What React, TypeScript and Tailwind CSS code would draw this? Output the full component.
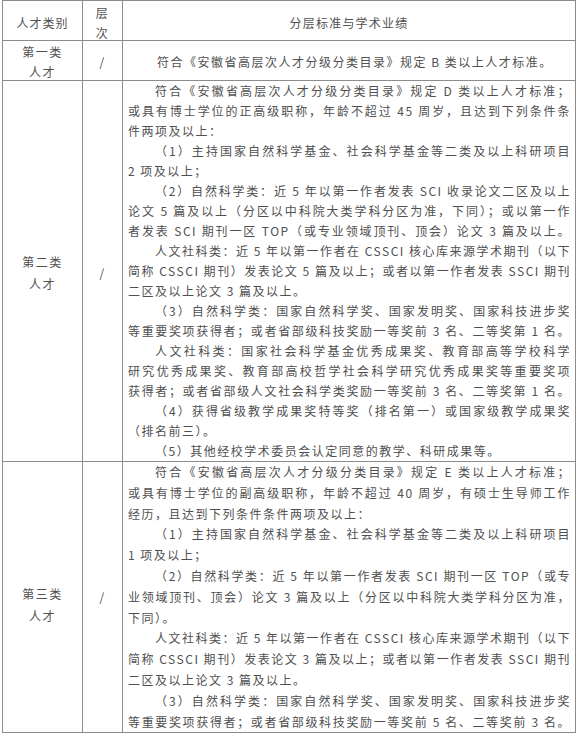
import React from "react";

type Line = { t: string; i?: boolean; f?: boolean };

const row2: Line[] = [
  { t: "符合《安徽省高层次人才分级分类目录》规定 D 类以上人才标准；", i: true, f: true },
  { t: "或具有博士学位的正高级职称，年龄不超过 45 周岁，且达到下列条件条", f: true },
  { t: "件两项及以上：" },
  { t: "（1）主持国家自然科学基金、社会科学基金等二类及以上科研项目", i: true, f: true },
  { t: "2 项及以上；" },
  { t: "（2）自然科学类：近 5 年以第一作者发表 SCI 收录论文二区及以上", i: true, f: true },
  { t: "论文 5 篇及以上（分区以中科院大类学科分区为准，下同）；或以第一作", f: true },
  { t: "者发表 SCI 期刊一区 TOP（或专业领域顶刊、顶会）论文 3 篇及以上。", f: true },
  { t: "人文社科类：近 5 年以第一作者在 CSSCI 核心库来源学术期刊（以下", i: true, f: true },
  { t: "简称 CSSCI 期刊）发表论文 5 篇及以上；或者以第一作者发表 SSCI 期刊", f: true },
  { t: "二区及以上论文 3 篇及以上。" },
  { t: "（3）自然科学类：国家自然科学奖、国家发明奖、国家科技进步奖", i: true, f: true },
  { t: "等重要奖项获得者；或者省部级科技奖励一等奖前 3 名、二等奖第 1 名。", f: true },
  { t: "人文社科类：国家社会科学基金优秀成果奖、教育部高等学校科学", i: true, f: true },
  { t: "研究优秀成果奖、教育部高校哲学社会科学研究优秀成果奖等重要奖项", f: true },
  { t: "获得者；或者省部级人文社会科学类奖励一等奖前 3 名、二等奖第 1 名。", f: true },
  { t: "（4）获得省级教学成果奖特等奖（排名第一）或国家级教学成果奖", i: true, f: true },
  { t: "（排名前三）。" },
  { t: "（5）其他经校学术委员会认定同意的教学、科研成果等。", i: true },
];

const row3: Line[] = [
  { t: "符合《安徽省高层次人才分级分类目录》规定 E 类以上人才标准；", i: true, f: true },
  { t: "或具有博士学位的副高级职称，年龄不超过 40 周岁，有硕士生导师工作", f: true },
  { t: "经历，且达到下列条件条件两项及以上：" },
  { t: "（1）主持国家自然科学基金、社会科学基金等二类及以上科研项目", i: true, f: true },
  { t: "1 项及以上；" },
  { t: "（2）自然科学类：近 5 年以第一作者发表 SCI 期刊一区 TOP（或专", i: true, f: true },
  { t: "业领域顶刊、顶会）论文 3 篇及以上（分区以中科院大类学科分区为准，", f: true },
  { t: "下同）。" },
  { t: "人文社科类：近 5 年以第一作者在 CSSCI 核心库来源学术期刊（以下", i: true, f: true },
  { t: "简称 CSSCI 期刊）发表论文 3 篇及以上；或者以第一作者发表 SSCI 期刊", f: true },
  { t: "二区及以上论文 3 篇及以上。" },
  { t: "（3）自然科学类：国家自然科学奖、国家发明奖、国家科技进步奖", i: true, f: true },
  { t: "等重要奖项获得者；或者省部级科技奖励一等奖前 5 名、二等奖前 3 名。", f: true },
];

function TextLine({ line }: { line: Line }) {
  return (
    <div
      className={`whitespace-nowrap ${line.f ? "text-justify [text-align-last:justify]" : "text-left"} ${
        line.i ? "pl-[27px]" : "pl-0"
      }`}
    >
      {line.t}
    </div>
  );
}

const cell = "border-r border-b border-[#8c8c8c]";

export default function App() {
  return (
    <div className="w-[577px] h-[733px] overflow-hidden bg-white font-['Noto_Sans_CJK_SC',sans-serif] text-[12px] tracking-[1.5px] text-[#505050]">
      <div className="ml-[2px] w-[574px] border-t border-l border-[#8c8c8c] grid grid-cols-[80px_40px_1fr]">
        {/* header */}
        <div className={`${cell} h-[40px] flex items-center justify-center pt-[4px] tracking-[1px]`}>人才类别</div>
        <div className={`${cell} h-[40px] flex flex-col items-center justify-center leading-[20px] pt-[4px]`}>
          <span>层</span>
          <span>次</span>
        </div>
        <div className={`${cell} h-[40px] flex items-center justify-center pt-[4px] tracking-[1.2px]`}>
          分层标准与学术业绩
        </div>

        {/* row 1 */}
        <div className={`${cell} h-[40px] flex flex-col items-center justify-center leading-[20px] pt-[2px]`}>
          <span>第一类</span>
          <span>人才</span>
        </div>
        <div className={`${cell} h-[40px] flex items-center justify-center pt-[3px]`}>/</div>
        <div className={`${cell} h-[40px] flex items-center pl-[5px] pr-[4px] pt-[3px]`}>
          <div className="pl-[29px] whitespace-nowrap">符合《安徽省高层次人才分级分类目录》规定 B 类以上人才标准。</div>
        </div>

        {/* row 2 */}
        <div className={`${cell} flex flex-col items-center justify-center leading-[22px] pt-[4px]`}>
          <span>第二类</span>
          <span>人才</span>
        </div>
        <div className={`${cell} flex items-center justify-center pt-[4px]`}>/</div>
        <div className={`${cell} pl-[5px] pr-[4px] leading-[20px]`}>
          {row2.map((l, k) => (
            <TextLine key={k} line={l} />
          ))}
        </div>

        {/* row 3 */}
        <div className={`${cell} flex flex-col items-center justify-center leading-[22px] pt-[16px]`}>
          <span>第三类</span>
          <span>人才</span>
        </div>
        <div className={`${cell} flex items-center justify-center pt-0`}>/</div>
        <div className={`${cell} pl-[5px] pr-[4px] leading-[20.8px]`}>
          {row3.map((l, k) => (
            <TextLine key={k} line={l} />
          ))}
        </div>
      </div>
    </div>
  );
}
